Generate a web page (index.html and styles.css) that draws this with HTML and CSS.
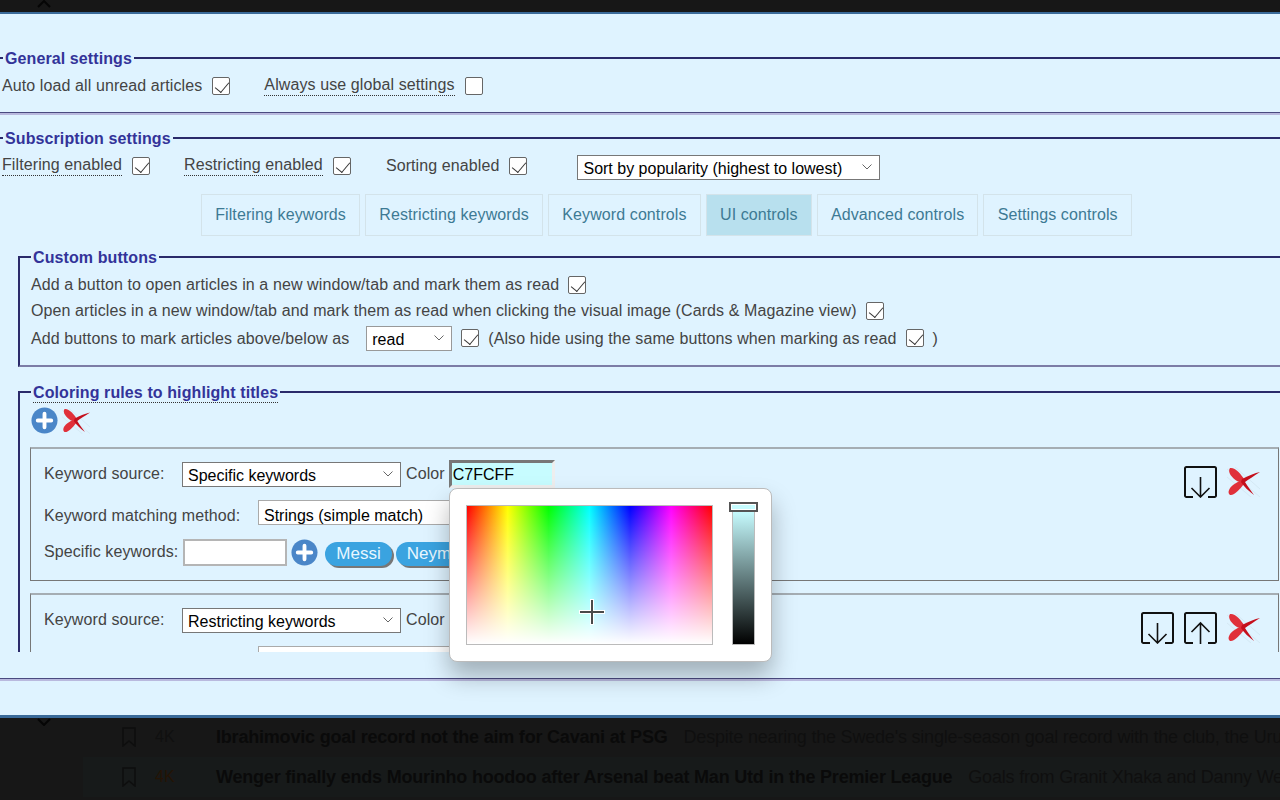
FILE: index.html

```html
<!DOCTYPE html>
<html lang="en">
<head>
    <meta charset="UTF-8">
    <title>Settings</title>
    <link rel="stylesheet" href="styles.css">
</head>
<body>
    <svg class="defs" width="0" height="0">
        <symbol id="plus" viewBox="0 0 28 28">
            <circle cx="14" cy="14" r="13.5" fill="#4a86c8"/>
            <path d="M14 7v14M7 14h14" stroke="#fff" stroke-width="4" stroke-linecap="round"/>
        </symbol>
        <symbol id="cross" viewBox="0 0 33 30">
            <path d="M0 2L33 30M0 10L24 30M8 0L33 22" stroke="#cfe3ee" stroke-width="1" opacity=".6"/>
            <path d="M3 1C8 0 14 7 17 12C14 15 12 15 10 14C5 11 0 5 3 1Z" fill="#e0303a"/>
            <path d="M14 13C16 13 18 15 17 17C13 22 7 29 3 28C0 26 2 21 6 18C9 16 12 14 14 13Z" fill="#e0303a"/>
            <path d="M15 12C21 9 28 6 33 5C27 9 22 12 18 15C21 20 25 25 27 28C22 24 17 20 14 15Z" fill="#c50f1c"/>
        </symbol>
        <symbol id="down" viewBox="0 0 33 32">
            <path d="M9 31H2.500a1.500 1.500 0 0 1-1.500-1.500V2.500A1.500 1.500 0 0 1 2.500 1h28A1.500 1.500 0 0 1 32 2.500v27a1.500 1.500 0 0 1-1.500 1.500H24" fill="none" stroke="#111" stroke-width="2"/>
            <path d="M16.500 11v20M7.500 22l9 9 9-9" fill="none" stroke="#111" stroke-width="1.600"/>
        </symbol>
        <symbol id="up" viewBox="0 0 33 32">
            <path d="M9 31H2.500a1.500 1.500 0 0 1-1.500-1.500V2.500A1.500 1.500 0 0 1 2.500 1h28A1.500 1.500 0 0 1 32 2.500v27a1.500 1.500 0 0 1-1.500 1.500H24" fill="none" stroke="#111" stroke-width="2"/>
            <path d="M16.500 32V11M7.500 20l9-9 9 9" fill="none" stroke="#111" stroke-width="1.600"/>
        </symbol>
        <symbol id="bookmark" viewBox="0 0 14 20">
            <path d="M1 1h12v18l-6-5-6 5z" fill="none" stroke="#0e0e0e" stroke-width="1.500"/>
        </symbol>
    </svg>

    <div class="top-strip">
        <svg class="chevron" width="14" height="8" viewBox="0 0 14 8"><path d="M1 7l6-6 6 6" fill="none" stroke="#050505" stroke-width="2"/></svg>
    </div>

    <div class="modal">
        <fieldset class="section general">
            <legend>General settings</legend>
            <div class="row">
                <span class="label">Auto load all unread articles</span>
                <input type="checkbox" class="check c-auto" checked>
                <span class="label hint m-always">Always use global settings</span>
                <input type="checkbox" class="check c-always">
            </div>
        </fieldset>

        <fieldset class="section subscription">
            <legend>Subscription settings</legend>
            <div class="row">
                <span class="label hint">Filtering enabled</span>
                <input type="checkbox" class="check c-filter" checked>
                <span class="label hint m-restrict">Restricting enabled</span>
                <input type="checkbox" class="check c-restrict" checked>
                <span class="label m-sort">Sorting enabled</span>
                <input type="checkbox" class="check c-sort" checked>
                <select class="sort-select">
                    <option>Sort by popularity (highest to lowest)</option>
                </select>
            </div>

            <div class="tabs">
                <a class="tab">Filtering keywords</a>
                <a class="tab">Restricting keywords</a>
                <a class="tab">Keyword controls</a>
                <a class="tab active">UI controls</a>
                <a class="tab">Advanced controls</a>
                <a class="tab">Settings controls</a>
            </div>

            <div class="tab-body">
                <fieldset class="group custom">
                    <legend>Custom buttons</legend>
                    <div class="line">
                        <span class="label">Add a button to open articles in a new window/tab and mark them as read</span>
                        <input type="checkbox" class="check" checked>
                    </div>
                    <div class="line">
                        <span class="label">Open articles in a new window/tab and mark them as read when clicking the visual image (Cards &amp; Magazine view)</span>
                        <input type="checkbox" class="check" checked>
                    </div>
                    <div class="line line-mark">
                        <span class="label">Add buttons to mark articles above/below as</span>
                        <select class="read-select"><option>read</option></select>
                        <input type="checkbox" class="check" checked>
                        <span class="label">(Also hide using the same buttons when marking as read</span>
                        <input type="checkbox" class="check" checked>
                        <span class="label">)</span>
                    </div>
                </fieldset>

                <fieldset class="group coloring">
                    <legend><span class="hint">Coloring rules to highlight titles</span></legend>
                    <div class="rule-tools">
                        <svg class="icon-plus"><use href="#plus"/></svg>
                        <svg class="icon-cross"><use href="#cross"/></svg>
                    </div>

                    <div class="rule">
                        <div class="rule-fields">
                            <div class="rule-row r-source">
                                <span class="label w-source">Keyword source:</span>
                                <select class="source-select"><option>Specific keywords</option></select>
                                <span class="label">Color</span>
                                <input class="color-input" value="C7FCFF">
                            </div>
                            <div class="rule-row r-method">
                                <span class="label w-method">Keyword matching method:</span>
                                <select class="method-select"><option>Strings (simple match)</option></select>
                            </div>
                            <div class="rule-row r-words">
                                <span class="label">Specific keywords:</span>
                                <input class="word-input">
                                <svg class="icon-plus"><use href="#plus"/></svg>
                                <span class="chip">Messi</span>
                                <span class="chip">Neymar</span>
                            </div>
                        </div>
                        <div class="rule-actions">
                            <svg class="icon-move"><use href="#down"/></svg>
                            <svg class="icon-cross"><use href="#cross"/></svg>
                        </div>
                    </div>

                    <div class="rule">
                        <div class="rule-fields">
                            <div class="rule-row r-source">
                                <span class="label w-source">Keyword source:</span>
                                <select class="source-select"><option>Restricting keywords</option></select>
                                <span class="label">Color</span>
                            </div>
                            <div class="rule-row r-method">
                                <span class="label w-method"></span>
                                <select class="method-select"><option></option></select>
                            </div>
                        </div>
                        <div class="rule-actions">
                            <svg class="icon-move"><use href="#down"/></svg>
                            <svg class="icon-move"><use href="#up"/></svg>
                            <svg class="icon-cross"><use href="#cross"/></svg>
                        </div>
                    </div>
                </fieldset>
            </div>
        </fieldset>

        <div class="picker">
            <div class="picker-field">
                <svg class="picker-cross" width="28" height="28" viewBox="0 0 28 28">
                    <path d="M14 1v26M1 14h26" stroke="#fff" stroke-width="4"/>
                    <path d="M14 2v24M2 14h24" stroke="#4a4a4a" stroke-width="2"/>
                </svg>
            </div>
            <div class="picker-slider">
                <span class="picker-thumb"></span>
            </div>
        </div>
    </div>

    <div class="list">
        <svg class="chevron chevron-down" width="14" height="8" viewBox="0 0 14 8"><path d="M1 1l6 6 6-6" fill="none" stroke="#050505" stroke-width="2"/></svg>
        <div class="entry">
            <svg class="bookmark"><use href="#bookmark"/></svg>
            <span class="count">4K</span>
            <b class="title">Ibrahimovic goal record not the aim for Cavani at PSG</b>
            <span class="snippet">Despite nearing the Swede's single-season goal record with the club, the Uru</span>
        </div>
        <div class="entry entry-alt">
            <svg class="bookmark"><use href="#bookmark"/></svg>
            <span class="count count-hot">4K</span>
            <b class="title">Wenger finally ends Mourinho hoodoo after Arsenal beat Man Utd in the Premier League</b>
            <span class="snippet">Goals from Granit Xhaka and Danny We</span>
        </div>
    </div>
</body>
</html>
```

FILE: styles.css

```css
* {
    box-sizing: border-box;
}

html, body {
    margin: 0;
    height: 800px;
    overflow: hidden;
}

body {
    font-family: "Liberation Sans", Arial, sans-serif;
    font-size: 16px;
    background: #171717;
    color: #444;
}

.defs {
    position: absolute;
}

.top-strip {
    height: 12px;
    overflow: hidden;
    padding-left: 37px;
}

.chevron {
    display: block;
}

.modal {
    position: relative;
    height: 706px;
    background: #dff3ff;
    border-top: 2px solid #3a6a99;
    border-bottom: 3px solid #3a6a99;
    padding-top: 35px;
    overflow: hidden;
}

/* sections run past the window edges, only top and bottom lines show */
.section {
    margin: 0 -4px 0 -2px;
    padding: 0 0 0 2px;
    border: 2px solid #2a2a6a;
    border-bottom: 1px solid #4a4a80;
    box-shadow: 0 2px 0 #b9b9de;
    min-width: 0;
}

legend {
    font-weight: bold;
    color: #333399;
    padding: 2px 2px 0;
    line-height: 16px;
    letter-spacing: 0.1px;
}

.section > legend {
    margin-left: 1px;
}

.general {
    height: 64px;
    margin-bottom: 16px;
}

.subscription {
    height: 550px;
}

.row {
    display: flex;
    align-items: center;
    height: 24px;
    margin-top: 7px;
}

.label {
    white-space: nowrap;
    letter-spacing: 0.1px;
}

.hint {
    border-bottom: 1px dotted #333;
    padding-bottom: 1px;
}

.check {
    appearance: none;
    flex: none;
    position: relative;
    width: 18px;
    height: 18px;
    margin: 0;
    background: #fff;
    border: 1px solid #666;
    border-radius: 2px;
}

.check:checked::after {
    content: "";
    position: absolute;
    left: 5px;
    top: 1px;
    width: 7px;
    height: 12px;
    border: solid #333;
    border-width: 0 1.5px 1.5px 0;
    transform: rotate(40deg);
}

.c-auto { margin-left: 10px; }
.m-always { margin-left: 34px; }
.c-always { margin-left: 10px; }
.c-filter { margin-left: 10px; }
.m-restrict { margin-left: 34px; }
.c-restrict { margin-left: 10px; }
.m-sort { margin-left: 35px; }
.c-sort { margin-left: 10px; }

select {
    appearance: none;
    font-family: "Liberation Sans", Arial, sans-serif;
    font-size: 16px;
    color: #000;
    height: 25px;
    padding: 2px 20px 0 5px;
    background: #fff url("data:image/svg+xml,%3Csvg xmlns='http://www.w3.org/2000/svg' width='10' height='6'%3E%3Cpath d='M.5.5l4.500 4.500L9.500.5' fill='none' stroke='%23666'/%3E%3C/svg%3E") no-repeat right 7px center;
    border: 1px solid #777;
    border-radius: 0;
}

.sort-select {
    width: 303px;
    margin-left: 50px;
    margin-top: 2px;
}

.tabs {
    display: flex;
    gap: 5px;
    margin: 16px 0 0 199px;
}

.tab {
    height: 42px;
    padding: 0 13.200px;
    display: flex;
    align-items: center;
    color: #3d7a94;
    border: 1px solid #d3e3ea;
    white-space: nowrap;
    letter-spacing: 0.1px;
}

.tab.active {
    background: #b8e0ee;
}

.tab-body {
    height: 409px;
    margin-top: 7px;
    padding-left: 16px;
    overflow: hidden;
}

.group {
    margin: 5px -10px 0 0;
    padding: 0 0 0 11px;
    border: 2px solid #2a2a6a;
    border-bottom-color: #7c7ca6;
    min-width: 0;
}

.custom {
    height: 119px;
    margin-bottom: 16px;
    padding-top: 6px;
}

.line {
    display: flex;
    align-items: center;
    gap: 9px;
    height: 26px;
}

.line-mark {
    margin-top: 1px;
}

.line-mark .label {
    padding-top: 2px;
}

.read-select {
    width: 86px;
    margin-left: 8px;
    border-color: #999;
}

.rule-tools {
    display: flex;
    align-items: center;
    gap: 4px;
    margin-top: 6px;
}

.icon-plus {
    width: 27px;
    height: 27px;
    flex: none;
}

.icon-cross {
    width: 33px;
    height: 30px;
    flex: none;
}

.rule-tools .icon-cross {
    width: 28px;
    height: 26px;
}

.icon-move {
    width: 33px;
    height: 32px;
    flex: none;
}

.rule {
    display: flex;
    justify-content: space-between;
    height: 134px;
    margin: 13px 11px 12px -1px;
    padding: 11px 18px 0 13px;
    border: 1px solid #777;
    border-top: 2px solid #a5adb3;
}

.rule + .rule {
    margin-top: 12px;
}

.rule-row {
    display: flex;
    align-items: center;
}

.r-source {
    height: 28px;
    gap: 5px;
}

.r-method {
    height: 25px;
    margin-top: 12px;
}

.r-words {
    height: 28px;
    margin-top: 13px;
    gap: 4px;
}

.w-source {
    width: 133px;
}

.w-method {
    width: 214px;
    padding-top: 6px;
}

.source-select {
    width: 219px;
}

.method-select {
    width: 300px;
    padding-top: 5px;
    border-color: #aaa;
}

.color-input {
    width: 106px;
    height: 28px;
    margin-left: -1px;
    padding: 2px 1px 0;
    font-family: "Liberation Sans", Arial, sans-serif;
    font-size: 16px;
    color: #000;
    background: #c7fcff;
    border: 3px solid #eee;
    border-top-color: #777;
    border-left-color: #777;
    outline: none;
}

.word-input {
    width: 104px;
    height: 27px;
    margin-left: 1px;
    background: #fff;
    border: 2px solid #b5b5b5;
}

.chip {
    height: 24px;
    padding: 0 11px;
    margin: 3px 0 0 3px;
    border-radius: 12px;
    background: #3aa3e0;
    color: #e8f7ff;
    font-size: 17px;
    line-height: 24px;
    box-shadow: 2px 2px 0 #777;
}

.chip + .chip {
    margin-left: 0;
}

.rule-actions {
    display: flex;
    gap: 10px;
    height: 34px;
    margin-top: 5px;
    align-items: center;
}

/* color picker popup */
.picker {
    position: absolute;
    left: 449px;
    top: 474px;
    width: 323px;
    height: 174px;
    background: #fff;
    border: 1px solid #bbb;
    border-radius: 8px;
    box-shadow: 0 14px 24px rgba(0, 0, 0, 0.28);
}

.picker-field {
    position: absolute;
    left: 16px;
    top: 16px;
    width: 247px;
    height: 140px;
    border: 1px solid #bbb;
    background: linear-gradient(to bottom, rgba(255, 255, 255, 0), #fff),
        linear-gradient(to right, #f00, #ff0 16.600%, #0f0 33.300%, #0ff 50%, #00f 66.600%, #f0f 83.300%, #f00);
}

.picker-cross {
    position: absolute;
    left: 111px;
    top: 92px;
}

.picker-slider {
    position: absolute;
    left: 282px;
    top: 21px;
    width: 23px;
    height: 135px;
    border: 1px solid #bbb;
    background: linear-gradient(to bottom, #c7fcff, #000);
}

.picker-thumb {
    position: absolute;
    left: -4px;
    top: -9px;
    width: 29px;
    height: 10px;
    border: 2px solid #555;
    background: #c7fcff;
    box-shadow: inset 0 0 0 1px #fff;
}

/* dimmed article list behind the dialog */
.list {
    position: relative;
    height: 82px;
    overflow: hidden;
}

.chevron-down {
    position: absolute;
    left: 37px;
    top: 0;
}

.entry {
    display: flex;
    align-items: center;
    height: 40px;
    margin-left: 83px;
    padding-left: 39px;
    white-space: nowrap;
    font-size: 18px;
    letter-spacing: -0.2px;
    color: #0f0f0f;
}

.entry:first-of-type {
    margin-top: -1px;
}

.entry-alt {
    background: #171a1a;
}

.bookmark {
    width: 14px;
    height: 20px;
    flex: none;
}

.count {
    width: 61px;
    margin-left: 19px;
    flex: none;
    font-size: 16px;
    letter-spacing: 0;
    color: #101010;
}

.count-hot {
    color: #241405;
}

.title {
    color: #0a0a0a;
}

.snippet {
    margin-left: 16px;
}
```
